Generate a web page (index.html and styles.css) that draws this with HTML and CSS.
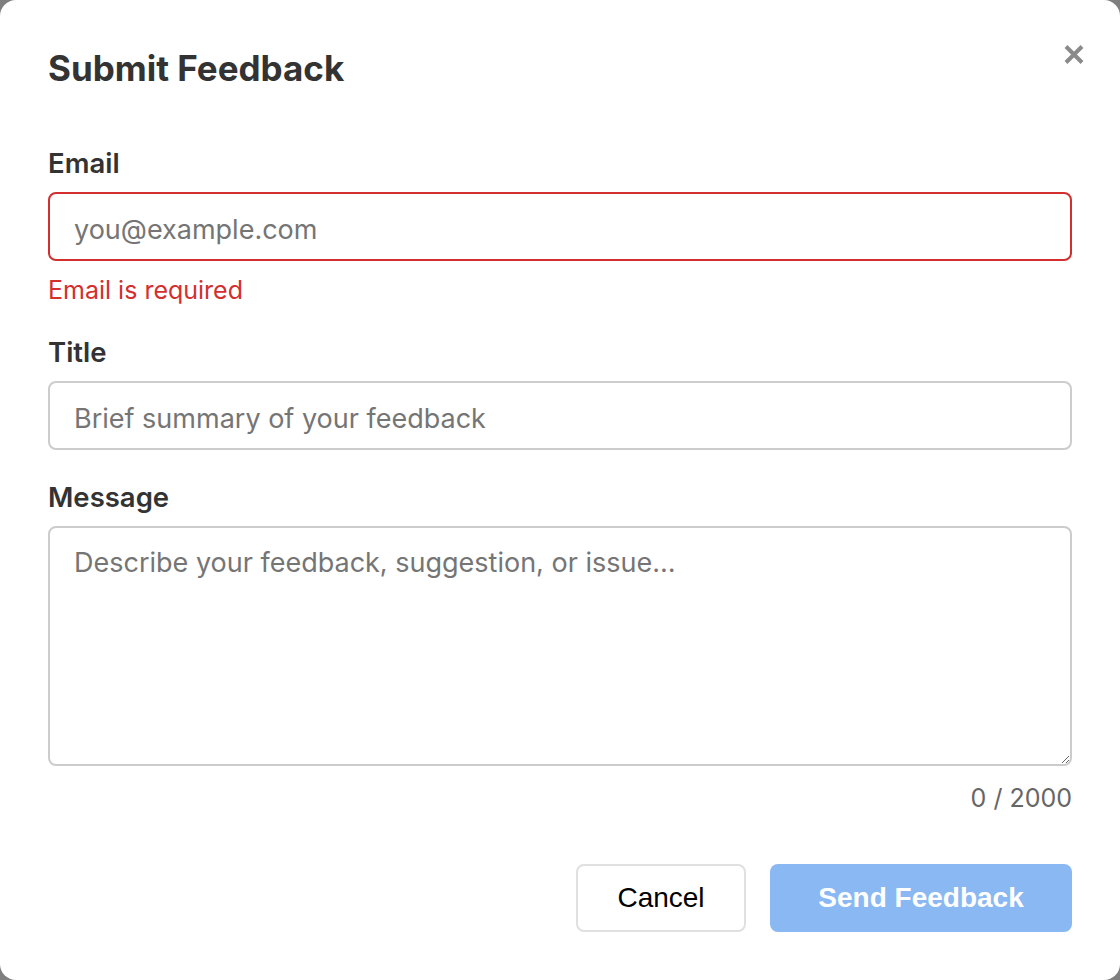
FILE: index.html
```html
<!DOCTYPE html>
<html lang="en">
<head>
  <meta charset="UTF-8">
  <title>Submit Feedback</title>
  <meta name="viewport" content="width=device-width, initial-scale=1.0">
  <link rel="stylesheet" href="styles.css">
</head>
<body>
  <div class="modal">
    <div class="modal-header">
      <h2 class="modal-title">Submit Feedback</h2>
      <button class="close-btn" type="button" aria-label="Close">
        <svg width="20" height="21" viewBox="0 0 20 21">
          <path d="M2 2.5 L18 18.5 M18 2.5 L2 18.5" stroke="#8a8a8a" stroke-width="4" fill="none"/>
        </svg>
      </button>
    </div>
    <form class="feedback-form">
      <div class="field">
        <label class="field-label" for="email">Email</label>
        <input class="field-input invalid" id="email" type="email" placeholder="you@example.com">
        <div class="field-error">Email is required</div>
      </div>
      <div class="field">
        <label class="field-label" for="title">Title</label>
        <input class="field-input" id="title" type="text" placeholder="Brief summary of your feedback">
      </div>
      <div class="field field-last">
        <label class="field-label" for="message">Message</label>
        <textarea class="field-input field-textarea" id="message" placeholder="Describe your feedback, suggestion, or issue…"></textarea>
        <div class="char-count">0 / 2000</div>
      </div>
      <div class="modal-actions">
        <button class="btn btn-secondary" type="button">Cancel</button>
        <button class="btn btn-primary" type="submit" disabled>Send Feedback</button>
      </div>
    </form>
  </div>
</body>
</html>
```

FILE: styles.css
```css
body {
  margin: 0;
  padding: 0;
  background: #7f7f7f;
  font-family: Inter, 'Noto Sans', sans-serif;
  color: #333;
}
.modal {
  width: 1120px;
  height: 980px;
  box-sizing: border-box;
  background: #fff;
  border-radius: 16px;
  padding: 44px 48px 48px 48px;
}
.modal-header {
  display: flex;
  justify-content: space-between;
  align-items: flex-start;
  margin-bottom: 56px;
}
.modal-title {
  margin: 3px 0 0 0;
  font-size: 35px;
  line-height: 43px;
  font-weight: 700;
  color: #333;
}
.close-btn {
  background: none;
  border: none;
  padding: 0;
  margin-right: -12px;
  width: 20px;
  height: 21px;
  cursor: pointer;
  display: block;
}
.close-btn svg {
  display: block;
}
.field {
  display: flex;
  flex-direction: column;
  margin-bottom: 30px;
}
.field-last {
  margin-bottom: 51px;
}
.field-label {
  font-size: 27.5px;
  line-height: 34px;
  font-weight: 600;
  color: #333;
  margin-bottom: 12px;
}
.field-input {
  box-sizing: border-box;
  height: 69px;
  border: 2px solid #cccccc;
  border-radius: 8px;
  padding: 5px 24px 0 24px;
  font-family: Inter, 'Noto Sans', sans-serif;
  font-size: 27px;
  color: #333;
  background: #fff;
  outline: none;
}
.field-input::placeholder {
  color: #757575;
}
.field-input.invalid {
  border-color: #d32f2f;
}
.field-error {
  margin-top: 14px;
  font-size: 25px;
  line-height: 30px;
  color: #d32f2f;
}
.field-textarea {
  height: 240px;
  padding: 18px 24px;
  line-height: 34px;
  resize: vertical;
}
.char-count {
  margin-top: 18px;
  text-align: right;
  font-size: 25px;
  line-height: 29px;
  color: #666;
}
.modal-actions {
  display: flex;
  justify-content: flex-end;
  gap: 24px;
}
.btn {
  box-sizing: border-box;
  height: 68px;
  border-radius: 8px;
  font-family: 'Liberation Sans', Arial, sans-serif;
  font-size: 28px;
  cursor: pointer;
}
.btn-secondary {
  width: 170px;
  background: #fff;
  border: 2px solid #e0e0e0;
  color: #000;
}
.btn-primary {
  width: 302px;
  background: #8ab8f3;
  border: none;
  color: #fff;
  font-weight: 700;
}
```
